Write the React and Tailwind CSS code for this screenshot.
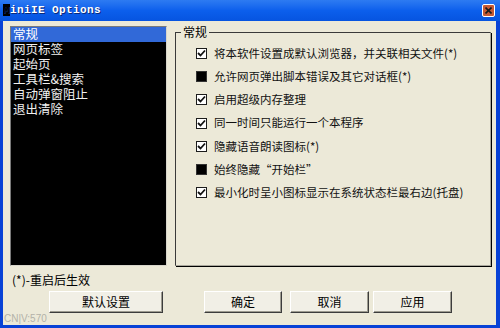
import React from "react";

const cjk = "font-['Noto_Sans_CJK_SC','Noto_Sans',sans-serif]";

const categories = ["常规", "网页标签", "起始页", "工具栏&搜索", "自动弹窗阻止", "退出清除"];

const options = [
    { label: "将本软件设置成默认浏览器，并关联相关文件(*)", checked: true },
    { label: "允许网页弹出脚本错误及其它对话框(*)", checked: false },
    { label: "启用超级内存整理", checked: true },
    { label: "同一时间只能运行一个本程序", checked: true },
    { label: "隐藏语音朗读图标(*)", checked: true },
    { label: "始终隐藏“开始栏”", checked: false },
    { label: "最小化时呈小图标显示在系统状态栏最右边(托盘)", checked: true },
];

const CheckBox = ({ checked }) =>
    checked ? (
        <span className="w-[11px] h-[11px] shrink-0 bg-white border border-[#1c1c1c] flex items-center justify-center">
            <svg width="9" height="9" viewBox="0 0 9 9">
                <path d="M1 4 L3.5 6.5 L8 1.5" stroke="#111" strokeWidth="1.8" fill="none" />
            </svg>
        </span>
    ) : (
        <span className="w-[11px] h-[11px] shrink-0 bg-black border border-[#333]" />
    );

const Button = ({ children, className = "" }) => (
    <button
        className={`h-[22px] bg-[#f1efe6] border border-t-white border-l-white border-r-[#3c3c3c] border-b-[#3c3c3c] shadow-[inset_-1px_-1px_0_#9d9b8f] text-[12px] leading-none text-black ${cjk} ${className}`}
    >
        {children}
    </button>
);

const App = () => {
    return (
        <div className="w-[500px] h-[328px] flex flex-col bg-[#0842d6] overflow-hidden">
            {/* title bar */}
            <div className="h-[21px] shrink-0 flex items-center justify-between pl-[3px] pr-[5px] bg-gradient-to-b from-[#2d7bf2] via-[#0c5fec] to-[#0654e0]">
                <span className="font-['Liberation_Mono',monospace] font-bold text-[11px] leading-none text-white tracking-[0.4px] [text-shadow:1px_1px_0_#0b2a7a]">
                    <span className="bg-black text-black">M</span>iniIE Options
                </span>
                <span className="w-[13px] h-[13px] rounded-[2px] border border-white bg-[#c65a34] flex items-center justify-center">
                    <svg width="7" height="7" viewBox="0 0 7 7">
                        <path d="M0.5 0.5 L6.5 6.5 M6.5 0.5 L0.5 6.5" stroke="#1a1a1a" strokeWidth="1.6" />
                    </svg>
                </span>
            </div>

            {/* body */}
            <div className="flex-1 ml-[3px] mr-[4px] mb-[3px] bg-[#ece9d8] flex flex-col">
                <div className="flex items-start">
                    <ul className={`mt-[5px] ml-[7px] w-[157px] h-[240px] bg-black border border-t-[#7a7a7a] border-l-[#7a7a7a] border-r-[#d8d6cc] border-b-[#d8d6cc] ${cjk} text-[12.5px] text-[#f0f0f0]`}>
                        {categories.map((c, i) => (
                            <li key={c} className={`h-[15px] pl-[2px] flex items-center leading-none ${i === 0 ? "bg-[#3169d8] text-white" : ""}`}>
                                {c}
                            </li>
                        ))}
                    </ul>

                    <fieldset className="mt-[4px] ml-[8px] w-[316px] h-[241px] border border-t-[#3a3a3a] border-l-[#3a3a3a] border-r-[#a9a79c] border-b-[#a9a79c] shadow-[1px_1px_0_#000]">
                        <legend className={`ml-[5px] px-[2px] text-[12px] leading-[14px] text-black ${cjk}`}>常规</legend>
                        <div className="pt-[3px] pl-[20px] flex flex-col">
                            {options.map((o) => (
                                <div key={o.label} className="h-[23.2px] flex items-center gap-[7px]">
                                    <CheckBox checked={o.checked} />
                                    <span className={`text-[11.5px] leading-none text-[#111] whitespace-nowrap ${cjk}`}>{o.label}</span>
                                </div>
                            ))}
                        </div>
                    </fieldset>
                </div>

                <div className={`mt-[7px] pl-[9px] h-[14px] text-[12px] leading-[14px] text-black ${cjk}`}>(*)-重启后生效</div>

                <div className="mt-[4px] flex">
                    <Button className="ml-[46px] w-[114px]">默认设置</Button>
                    <Button className="ml-[41px] w-[78px]">确定</Button>
                    <Button className="ml-[8px] w-[79px]">取消</Button>
                    <Button className="ml-[4px] w-[79px]">应用</Button>
                </div>

                <div className="pl-[1px] h-[12px] text-[10px] leading-[12px] text-[#b3b2a8] font-['Liberation_Sans',sans-serif]">
                    CN|V:570
                </div>
            </div>
        </div>
    );
};

export default App;
